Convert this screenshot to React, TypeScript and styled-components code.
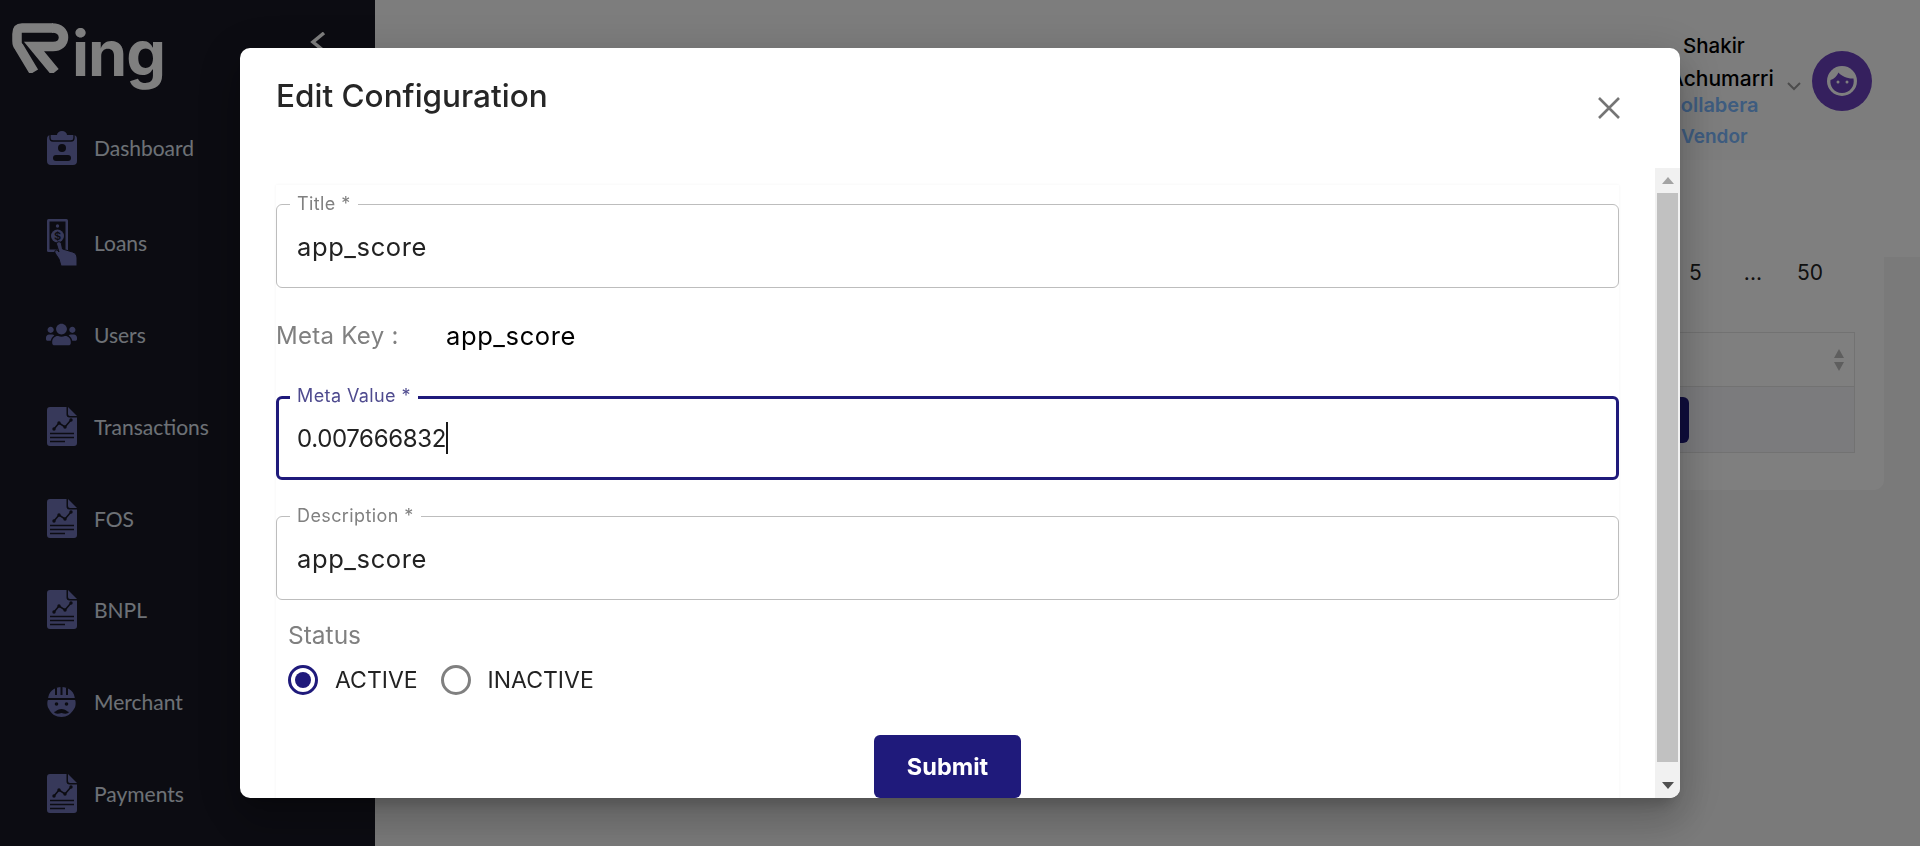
import styled, { createGlobalStyle } from "styled-components";
import { FaUsers } from "react-icons/fa";

const GlobalStyle = createGlobalStyle`
  html, body {
    margin: 0;
    padding: 0;
    background: #f5f5f5;
  }
  * {
    box-sizing: border-box;
  }
`;

const SPage = styled.div`
  display: flex;
  width: 1920px;
  height: 846px;
  overflow: hidden;
  font-family: "Inter", "Liberation Sans", sans-serif;
`;

const SSidebar = styled.aside`
  flex: 0 0 375px;
  background: #181824;
  display: flex;
  flex-direction: column;
`;

const SLogoRow = styled.div`
  height: 102px;
  padding: 23px 48px 0 12px;
  display: flex;
  justify-content: space-between;
  align-items: flex-start;
`;

const SLogo = styled.div`
  display: flex;
  align-items: flex-start;
  color: #ffffff;
`;

const SLogoText = styled.span`
  font-size: 63px;
  font-weight: 700;
  line-height: 61px;
  letter-spacing: -1px;
`;

const SCollapse = styled.div`
  margin-top: 9px;
  color: #ffffff;
`;

const SNavList = styled.nav`
  display: flex;
  flex-direction: column;
`;

const SNavItem = styled.a`
  height: 91.9px;
  padding-left: 46px;
  display: flex;
  align-items: center;
  font-family: "Lato", sans-serif;
  font-size: 21px;
  color: #dce2ec;

  &:first-child {
    margin-bottom: 2.5px;
  }
`;

const SNavIcon = styled.span`
  width: 31px;
  margin-right: 17px;
  display: flex;
  justify-content: center;
  color: #6e72b4;
`;

const SMain = styled.main`
  flex: 1;
  display: flex;
  flex-direction: column;
  min-width: 0;
`;

const SHeader = styled.header`
  height: 160px;
  flex: none;
  background: #fbfbfb;
  display: flex;
  justify-content: flex-end;
  align-items: flex-start;
  padding: 29px 48px 0 0;
`;

const SUserText = styled.div`
  width: 91px;
  font-size: 20.5px;
  font-weight: 500;
  color: #000000;
`;

const SName = styled.div`
  height: 33px;
  line-height: 33px;
  white-space: nowrap;
`;

const SNameWrapped = styled(SName)`
  margin-left: -14px;
  height: 28px;
  font-size: 21px;
`;

const SOrg = styled.div`
  height: 31px;
  line-height: 31px;
  font-size: 19px;
  color: #7cb8ff;
  white-space: nowrap;
  font-weight: 600;
`;

const SOrgWrapped = styled(SOrg)`
  margin-left: -17px;
  font-size: 20px;
`;

const SVendor = styled(SOrg)`
  margin-left: -2px;
`;

const SChevron = styled.div`
  margin: 46px 11px 0 13px;
  color: #999999;
`;

const SAvatar = styled.div`
  width: 60px;
  height: 60px;
  margin-top: 22px;
  border-radius: 50%;
  background: #6a40bc;
  display: flex;
  align-items: center;
  justify-content: center;
`;

const SToolbar = styled.div`
  height: 97px;
  flex: none;
  background: #ffffff;
`;

const SContent = styled.div`
  padding: 0 36px 0 24px;
`;

const SCard = styled.section`
  height: 233px;
  background: #ffffff;
  border-radius: 0 0 10px 10px;
  padding: 0 29px 0 0;
`;

const SPagination = styled.div`
  height: 75px;
  display: flex;
  justify-content: flex-end;
  align-items: center;
  padding: 3px 32px 47px 0;
  font-size: 21px;
  color: #222222;
  gap: 42px;

  & > :last-child {
    margin-left: -7px;
  }
`;

const STable = styled.div`
  border: 1px solid #e4e4e4;
`;

const STableHead = styled.div`
  height: 54px;
  display: flex;
  justify-content: flex-end;
  align-items: center;
  padding-right: 9px;
  border-bottom: 1px solid #e4e4e4;
  color: #bdbdbd;
`;

const STableRow = styled.div`
  height: 65px;
  background: #f6f6fb;
  display: flex;
  justify-content: flex-end;
  align-items: center;
  padding-right: 165px;
`;

const SRowButton = styled.div`
  width: 120px;
  height: 46px;
  background: #1f1a7b;
  border-radius: 6px;
`;

const SOverlay = styled.div`
  position: fixed;
  inset: 0;
  background: rgba(0, 0, 0, 0.5);
  display: flex;
  align-items: center;
  justify-content: center;
`;

const SModal = styled.div`
  width: 1440px;
  height: 750px;
  background: #ffffff;
  border-radius: 10px;
  overflow: hidden;
  display: flex;
  flex-direction: column;
  box-shadow: 0 11px 15px -7px rgba(0, 0, 0, 0.2),
    0 24px 38px 3px rgba(0, 0, 0, 0.14), 0 9px 46px 8px rgba(0, 0, 0, 0.12);
`;

const SModalHeader = styled.div`
  height: 120px;
  flex: none;
  display: flex;
  justify-content: space-between;
  align-items: flex-start;
  padding: 29px 60px 0 36px;
`;

const STitle = styled.h2`
  margin: 0;
  font-size: 31.5px;
  font-weight: 500;
  line-height: 38px;
  color: #262626;
`;

const SClose = styled.button`
  margin-top: 20px;
  padding: 0;
  border: 0;
  background: none;
  display: flex;
  color: #757575;
`;

const SModalBody = styled.div`
  flex: 1;
  min-height: 0;
  display: flex;
`;

const SScrollArea = styled.div`
  flex: 1;
  overflow: hidden;
  padding: 17px 36px 0 36px;
`;

const SForm = styled.form`
  padding-top: 19px;
  box-shadow: 0 0 3px rgba(0, 0, 0, 0.05);
  height: 700px;
`;

const SField = styled.div<{ $focused?: boolean }>`
  position: relative;
  height: 84px;
  border: ${(p) => (p.$focused ? "3px solid #1f1a7b" : "1px solid #bdbdbd")};
  border-radius: 6px;
  display: flex;
  align-items: center;
  padding-left: ${(p) => (p.$focused ? "18px" : "20px")};
`;

const SFieldLabel = styled.label<{ $focused?: boolean }>`
  position: absolute;
  left: ${(p) => (p.$focused ? "11px" : "13px")};
  top: ${(p) => (p.$focused ? "-13px" : "-11px")};
  padding: 0 7px;
  height: 20px;
  line-height: 20px;
  background: #ffffff;
  font-size: 18px;
  letter-spacing: 0.4px;
  color: ${(p) => (p.$focused ? "#4f4b8f" : "#808080")};
`;

const SFieldValue = styled.div<{ $numeric?: boolean }>`
  font-size: ${(p) => (p.$numeric ? "24px" : "25.5px")};
  letter-spacing: ${(p) => (p.$numeric ? "-0.35px" : "0.6px")};
  color: #222222;
  display: flex;
  align-items: center;
`;

const SCaret = styled.span`
  width: 2px;
  height: 32px;
  background: #1a1a1a;
`;

const SMetaRow = styled.div`
  height: 108px;
  display: flex;
  align-items: center;
  font-size: 24px;
  letter-spacing: 0.3px;
  padding-bottom: 14px;
`;

const SMetaLabel = styled.span`
  width: 170px;
  color: #808080;
`;

const SMetaValue = styled.span`
  color: #000000;
  font-size: 25.5px;
  letter-spacing: 0.6px;
`;

const SFieldGap = styled.div`
  height: 36px;
`;

const SStatusGroup = styled.div`
  padding: 18px 0 0 12px;
`;

const SStatusLabel = styled.div`
  font-size: 24.5px;
  line-height: 34px;
  color: #808080;
`;

const SRadioRow = styled.div`
  display: flex;
  align-items: center;
  margin-top: 13px;
  height: 30px;
`;

const SRadio = styled.span<{ $checked?: boolean }>`
  width: 30px;
  height: 30px;
  border-radius: 50%;
  border: 3px solid ${(p) => (p.$checked ? "#1f1a7b" : "#808080")};
  display: flex;
  align-items: center;
  justify-content: center;
  margin-right: 17px;

  &::after {
    content: "";
    width: 16px;
    height: 16px;
    border-radius: 50%;
    background: ${(p) => (p.$checked ? "#1f1a7b" : "transparent")};
  }
`;

const SRadioText = styled.span`
  font-size: 23px;
  color: #222222;
  margin-right: 23px;
`;

const SSubmitRow = styled.div`
  display: flex;
  justify-content: center;
  margin-top: 40px;
`;

const SSubmit = styled.button`
  width: 147px;
  height: 63px;
  border: 0;
  border-radius: 6px;
  background: #1f1a7b;
  color: #ffffff;
  font-family: inherit;
  font-size: 23.5px;
  font-weight: 700;
`;

const SScrollbar = styled.div`
  flex: 0 0 25px;
  background: #f1f1f1;
  display: flex;
  flex-direction: column;
  align-items: center;
`;

const SScrollArrow = styled.div<{ $down?: boolean }>`
  flex: none;
  height: 25px;
  display: flex;
  align-items: center;
  justify-content: center;

  &::before {
    content: "";
    border-left: 6px solid transparent;
    border-right: 6px solid transparent;
    ${(p) =>
      p.$down
        ? "border-top: 7px solid #505050;"
        : "border-bottom: 7px solid #a3a3a3;"}
  }
`;

const SScrollThumb = styled.div`
  width: 21px;
  height: 569px;
  background: #c1c1c1;
`;

const SScrollRest = styled.div`
  flex: 1;
`;

const DARK = "#181824";

const DocIcon = () => (
  <svg width="30" height="39" viewBox="0 0 30 39" fill="currentColor">
    <path d="M3 0h16.5v7.5a3 3 0 0 0 3 3H30V36a3 3 0 0 1-3 3H3a3 3 0 0 1-3-3V3a3 3 0 0 1 3-3z" />
    <path d="M21 0l9 9h-7a2 2 0 0 1-2-2z" />
    <path
      d="M7 22l5-6 6 4 6-7M3 26.5h24M3 30.5h24M3 34.5h15"
      fill="none"
      stroke={DARK}
      strokeWidth="1.6"
    />
    <circle cx="7" cy="22" r="1.7" fill={DARK} />
    <circle cx="12" cy="16" r="1.7" fill={DARK} />
    <circle cx="18" cy="20" r="1.7" fill={DARK} />
    <circle cx="24" cy="13" r="1.7" fill={DARK} />
  </svg>
);

const ClipboardIcon = () => (
  <svg width="30" height="34" viewBox="0 0 30 34" fill="currentColor">
    <path d="M4 4h6a5 4 0 0 1 10 0h6a4 4 0 0 1 4 4v22a4 4 0 0 1-4 4H4a4 4 0 0 1-4-4V8a4 4 0 0 1 4-4z" />
    <path d="M3 4v3a3 3 0 0 0 3 3h18a3 3 0 0 0 3-3V4" fill="none" stroke={DARK} strokeWidth="1.3" />
    <circle cx="15" cy="17" r="4" fill={DARK} />
    <rect x="6" y="24" width="18" height="6" rx="3" fill={DARK} />
  </svg>
);

const LoanIcon = () => (
  <svg width="30" height="47" viewBox="0 0 30 47" fill="currentColor">
    <rect x="0" y="0" width="21" height="33" rx="1.5" />
    <rect x="2.5" y="2.5" width="16" height="28" fill={DARK} />
    <circle cx="10.5" cy="17" r="6.5" />
    <text
      x="10.5"
      y="21"
      fontSize="11"
      textAnchor="middle"
      fill={DARK}
      fontFamily="Inter, sans-serif"
      fontWeight="600"
    >
      $
    </text>
    <circle cx="10.5" cy="7" r="1.7" />
    <path d="M9.5 25c0-3 4.5-3 5 0l1 5 10 3c3 1 4.5 3 4.5 6v8H14l-2-7-4-6c-1-3 2-4 3-2l1 1z" stroke={DARK} strokeWidth="1" />
  </svg>
);

const MerchantIcon = () => (
  <svg width="29" height="30" viewBox="0 0 29 30" fill="currentColor">
    <path d="M1 13C1 5 7 0 14.5 0S28 5 28 13c1 1 1 7-1 9-3 5-7 8-12.5 8S4 27 2 22c-2-2-2-8-1-9z" />
    <path d="M9 1v7M14.5 0v8M20 1v7M1 12h27" stroke={DARK} strokeWidth="2" fill="none" />
    <circle cx="9.5" cy="17" r="1.8" fill={DARK} />
    <circle cx="19.5" cy="17" r="1.8" fill={DARK} />
    <path d="M7 25c2 0 3-3 7.5-3S20 25 22 25c-1 2-4 2-7.5 1-3.5 1-6.5 1-7.5-1z" fill={DARK} />
  </svg>
);

const navItems = [
  { label: "Dashboard", icon: <ClipboardIcon /> },
  { label: "Loans", icon: <LoanIcon /> },
  { label: "Users", icon: <FaUsers size={31} /> },
  { label: "Transactions", icon: <DocIcon /> },
  { label: "FOS", icon: <DocIcon /> },
  { label: "BNPL", icon: <DocIcon /> },
  { label: "Merchant", icon: <MerchantIcon /> },
  { label: "Payments", icon: <DocIcon /> },
];

const App = () => {
  return (
    <>
      <GlobalStyle />
      <SPage>
        <SSidebar>
          <SLogoRow>
            <SLogo>
              <svg width="60" height="50" viewBox="0 0 60 50" fill="none" stroke="currentColor" strokeWidth="9.5">
                <path d="M41 5H10C6 5 5 7 5 11v7c0 3 0 4 2 6l15 25" />
                <path d="M40 5c8 0 11.5 4 11.5 9.5C51.5 20 47 23.5 41 23.5H22L43 49" />
              </svg>
              <SLogoText>ing</SLogoText>
            </SLogo>
            <SCollapse>
              <svg width="18" height="20" viewBox="0 0 18 20" fill="none" stroke="currentColor" strokeWidth="3.5">
                <path d="M15 1L4 10l11 9" />
              </svg>
            </SCollapse>
          </SLogoRow>
          <SNavList>
            {navItems.map((item) => (
              <SNavItem key={item.label}>
                <SNavIcon>{item.icon}</SNavIcon>
                {item.label}
              </SNavItem>
            ))}
          </SNavList>
        </SSidebar>
        <SMain>
          <SHeader>
            <SUserText>
              <SName>Shakir</SName>
              <SNameWrapped>Achumarri</SNameWrapped>
              <SOrgWrapped>Collabera</SOrgWrapped>
              <SVendor>Vendor</SVendor>
            </SUserText>
            <SChevron>
              <svg width="14" height="10" viewBox="0 0 14 10" fill="none" stroke="currentColor" strokeWidth="2">
                <path d="M1 2l6 6 6-6" />
              </svg>
            </SChevron>
            <SAvatar>
              <svg width="30" height="30" viewBox="0 0 30 30">
                <circle cx="15" cy="15" r="15" fill="#ffffff" />
                <path d="M3.5 14C7 13 10 10 11.5 6.5 14 10 21 13 26.500 12.500 28 20 23 27 15 27 7 27 2.500 20 3.500 14z" fill="#6a40bc" />
                <circle cx="11" cy="16" r="1.5" fill="#ffffff" />
                <circle cx="20" cy="16" r="1.5" fill="#ffffff" />
              </svg>
            </SAvatar>
          </SHeader>
          <SToolbar />
          <SContent>
            <SCard>
              <SPagination>
                <span>5</span>
                <span>...</span>
                <span>50</span>
              </SPagination>
              <STable>
                <STableHead>
                  <svg width="12" height="24" viewBox="0 0 12 24" fill="currentColor">
                    <path d="M6 1l5 9H1zM6 23l5-9H1z" />
                  </svg>
                </STableHead>
                <STableRow>
                  <SRowButton />
                </STableRow>
              </STable>
            </SCard>
          </SContent>
        </SMain>
        <SOverlay>
          <SModal>
            <SModalHeader>
              <STitle>Edit Configuration</STitle>
              <SClose type="button">
                <svg width="22" height="22" viewBox="0 0 22 22" fill="none" stroke="currentColor" strokeWidth="2.6">
                  <path d="M1 1l20 20M21 1L1 21" />
                </svg>
              </SClose>
            </SModalHeader>
            <SModalBody>
              <SScrollArea>
                <SForm>
                  <SField>
                    <SFieldLabel>Title *</SFieldLabel>
                    <SFieldValue>app_score</SFieldValue>
                  </SField>
                  <SMetaRow>
                    <SMetaLabel>Meta Key :</SMetaLabel>
                    <SMetaValue>app_score</SMetaValue>
                  </SMetaRow>
                  <SField $focused>
                    <SFieldLabel $focused>Meta Value *</SFieldLabel>
                    <SFieldValue $numeric>
                      0.007666832
                      <SCaret />
                    </SFieldValue>
                  </SField>
                  <SFieldGap />
                  <SField>
                    <SFieldLabel>Description *</SFieldLabel>
                    <SFieldValue>app_score</SFieldValue>
                  </SField>
                  <SStatusGroup>
                    <SStatusLabel>Status</SStatusLabel>
                    <SRadioRow>
                      <SRadio $checked />
                      <SRadioText>ACTIVE</SRadioText>
                      <SRadio />
                      <SRadioText>INACTIVE</SRadioText>
                    </SRadioRow>
                  </SStatusGroup>
                  <SSubmitRow>
                    <SSubmit type="button">Submit</SSubmit>
                  </SSubmitRow>
                </SForm>
              </SScrollArea>
              <SScrollbar>
                <SScrollArrow />
                <SScrollThumb />
                <SScrollRest />
                <SScrollArrow $down />
              </SScrollbar>
            </SModalBody>
          </SModal>
        </SOverlay>
      </SPage>
    </>
  );
};

export default App;
